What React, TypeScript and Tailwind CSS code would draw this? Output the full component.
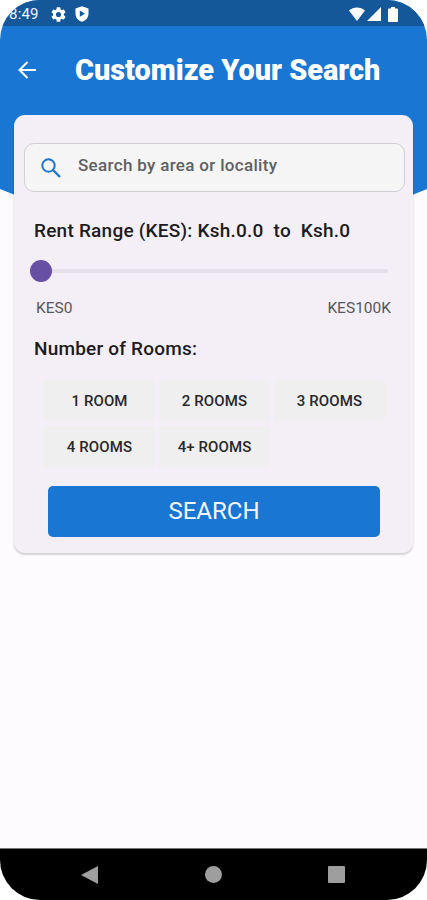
import React from 'react';

const rooms = ['1 ROOM', '2 ROOMS', '3 ROOMS', '4 ROOMS', '4+ ROOMS'];

const StatusBar: React.FC = () => (
  <div className="flex h-[26px] shrink-0 items-center bg-[#14589a] text-white">
    <span className="ml-[9px] w-[42px] pt-0.5 text-[15px] leading-none tracking-[0.2px] text-blue-50">8:49</span>
    <svg className="mt-0.5 h-[15px] w-[15px]" viewBox="2 2 20 20" fill="currentColor">
      <path d="M19.14 12.94c.04-.3.06-.61.06-.94 0-.32-.02-.64-.07-.94l2.03-1.58c.18-.14.23-.41.12-.61l-1.92-3.32c-.12-.22-.37-.29-.59-.22l-2.39.96c-.5-.38-1.03-.7-1.62-.94l-.36-2.54c-.04-.24-.24-.41-.48-.41h-3.84c-.24 0-.43.17-.47.41l-.36 2.54c-.59.24-1.13.57-1.62.94l-2.39-.96c-.22-.08-.47 0-.59.22L2.74 8.87c-.12.21-.08.47.12.61l2.03 1.58c-.05.3-.09.63-.09.94s.02.64.07.94l-2.03 1.58c-.18.14-.23.41-.12.61l1.92 3.32c.12.22.37.29.59.22l2.39-.96c.5.38 1.03.7 1.62.94l.36 2.54c.05.24.24.41.48.41h3.84c.24 0 .44-.17.47-.41l.36-2.54c.59-.24 1.13-.56 1.62-.94l2.39.96c.22.08.47 0 .59-.22l1.92-3.32c.12-.22.07-.47-.12-.61l-2.01-1.58zM12 15.400A3.400 3.400 0 1 1 12 8.600a3.400 3.400 0 0 1 0 6.800z" />
    </svg>
    <svg className="ml-2 mt-0.5 h-4 w-4" viewBox="0 0 16 16" fill="currentColor" fillRule="evenodd">
      <path d="M8 .2 14.500 2.500V7.500C14.500 11.500 12 14.500 8 15.800C4 14.500 1.500 11.500 1.500 7.500V2.500ZM5.800 4.600V10.800L11 7.700Z" />
    </svg>
    <div className="ml-auto mr-[29px] flex items-center pt-0.5">
      <svg className="h-[14px] w-4" viewBox="0 0 16 14" fill="currentColor">
        <path d="M0 3.500C4.500-.5 11.500-.5 16 3.500L8 14Z" />
      </svg>
      <svg className="ml-0.5 h-[14px] w-[14px]" viewBox="0 0 14 14" fill="currentColor">
        <path d="M14 0V14H0Z" />
      </svg>
      <svg className="ml-[7px] h-[15px] w-[10px]" viewBox="0 0 10 15" fill="currentColor">
        <path d="M3 0H7V1.500H9Q10 1.500 10 2.500V14Q10 15 9 15H1Q0 15 0 14V2.500Q0 1.500 1 1.500H3Z" />
      </svg>
    </div>
  </div>
);

const SearchCard: React.FC = () => (
  <div className="mx-[14px] h-[438px] rounded-[11px] bg-[#f4eff7] px-[10px] pt-7 shadow-[0_2px_2px_rgba(0,0,0,0.14),0_1px_3px_rgba(0,0,0,0.06)]">
    <div className="flex h-[49px] w-[381px] items-center rounded-[10px] border border-[#cfced2] bg-[#f5f5f5] pl-4">
      <svg className="h-5 w-5 text-[#1976d2]" viewBox="0 0 20 20" fill="none" stroke="currentColor" strokeWidth="2">
        <circle cx="7.500" cy="7.500" r="6.200" />
        <path d="m12 12 7 7" strokeWidth="2.400" />
      </svg>
      <span className="ml-[17px] pb-1 text-[17px] font-medium tracking-[0.32px] text-[#606062]">
        Search by area or locality
      </span>
    </div>

    <div className="px-[10px]">
      <h2 className="mt-[27px] whitespace-pre text-[19px] font-medium leading-6 tracking-[0.23px] text-[#1d1b20]">
        Rent Range (KES): Ksh.0.0  to  Ksh.0
      </h2>

      {/* Slider */}
      <div className="mt-[17px] flex h-[22px] w-[358px] items-center -ml-1">
        <div className="h-[22px] w-[22px] rounded-full bg-[#6750a4]"></div>
        <div className="h-1 grow rounded-r-full bg-[#e4dfe8]"></div>
      </div>

      <div className="mt-4 flex w-[357px] justify-between pb-[1px] pl-0.5 text-[15.5px] leading-5 text-[#58565c]">
        <span>KES0</span>
        <span>KES100K</span>
      </div>

      <h2 className="mt-[18px] text-[19px] font-medium leading-6 tracking-[0.2px] text-[#1d1b20]">Number of Rooms:</h2>

      <div className="ml-[10px] mt-[19px] grid w-[345px] grid-cols-3 gap-y-[5px]">
        {rooms.map((room) => (
          <button
            key={room}
            className="mr-[4px] flex h-[41px] items-center justify-center bg-[#efefef] pt-0.5 text-[15px] font-medium tracking-[0.1px] text-[#29282b]"
          >
            {room}
          </button>
        ))}
      </div>

      <button className="ml-[14px] mt-[19px] h-[51px] w-[332px] rounded-[5px] bg-[#1976d2] pb-0.5 text-[24px] text-[#f4f5ff]">
        SEARCH
      </button>
    </div>
  </div>
);

const App: React.FC = () => {
  return (
    <div className="h-[900px] w-[427px] bg-white font-['Roboto',sans-serif]">
      <div className="relative isolate flex h-full flex-col overflow-hidden rounded-[40px] bg-[#fefbff]">
        {/* Curved header backdrop */}
        <svg className="absolute left-0 top-0 -z-10 h-[240px] w-full" viewBox="0 0 427 240" fill="#1976d2">
          <path d="M0 0H427V189Q214 280 0 189Z" />
        </svg>

        <StatusBar />

        <header className="flex h-[89px] shrink-0 items-center pb-0.5 pl-[18px] text-white">
          <svg className="h-[18px] w-[18px]" viewBox="0 0 18 18" fill="none" stroke="currentColor" strokeWidth="2">
            <path d="M18 9H2M9.500 1 1.500 9l8 8" />
          </svg>
          <h1 className="ml-[39px] pt-0.5 text-[28.9px] font-black leading-none">Customize Your Search</h1>
        </header>

        <SearchCard />

        <nav className="mt-auto flex h-[52px] shrink-0 items-center justify-between border-t border-[#777] bg-black pl-[81px] pr-[82px] text-[#9e9e9e]">
          <svg className="h-[18px] w-[17px]" viewBox="0 0 17 18" fill="currentColor">
            <path d="M17 0V18L0 9Z" />
          </svg>
          <div className="h-[17px] w-[17px] rounded-full bg-[#9e9e9e]"></div>
          <div className="h-[17px] w-[17px] rounded-[1px] bg-[#9e9e9e]"></div>
        </nav>
      </div>
    </div>
  );
};

export default App;
